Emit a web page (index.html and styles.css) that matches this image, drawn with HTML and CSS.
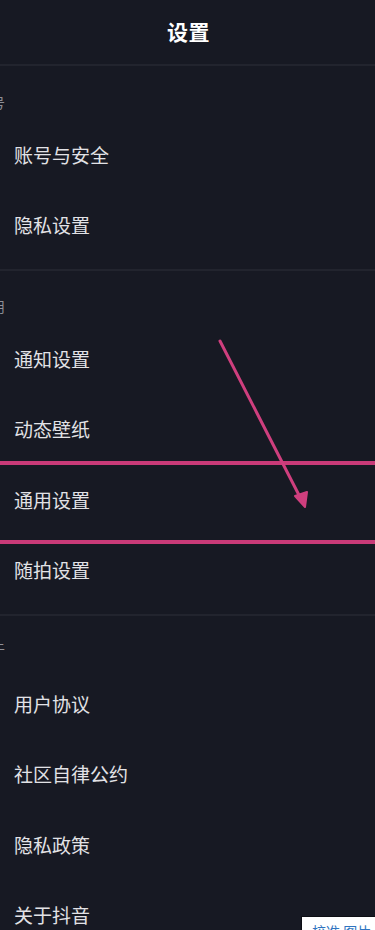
FILE: index.html
```html
<!DOCTYPE html>
<html lang="zh-CN">
<head>
<meta charset="utf-8">
<title>设置</title>
<link rel="stylesheet" href="styles.css">
</head>
<body>
<div class="screen">
  <header class="topbar"><h1 class="title">设置</h1></header>
  <section class="group first">
    <div class="group-head">账号</div>
    <div class="row">账号与安全</div>
    <div class="row">隐私设置</div>
  </section>
  <section class="group">
    <div class="group-head">通用</div>
    <div class="row">通知设置</div>
    <div class="row">动态壁纸</div>
    <div class="row">通用设置</div>
    <div class="row">随拍设置</div>
  </section>
  <section class="group last">
    <div class="group-head">关于</div>
    <div class="row">用户协议</div>
    <div class="row">社区自律公约</div>
    <div class="row">隐私政策</div>
    <div class="row">关于抖音</div>
  </section>

  <svg class="marks" width="375" height="930" viewBox="0 0 375 930">
    <rect x="0" y="461" width="375" height="4" fill="#c93a78"/>
    <rect x="0" y="540" width="375" height="4" fill="#c93a78"/>
    <line x1="220" y1="341" x2="302" y2="501" stroke="#cf3f7e" stroke-width="3" stroke-linecap="round"/>
    <path d="M295 496 L305 507 L307 492 Z" fill="#cf3f7e" stroke="#cf3f7e" stroke-width="2" stroke-linejoin="round"/>
  </svg>
  <div class="stamp"><span>校准 图片</span></div>
</div>
</body>
</html>
```
FILE: styles.css
```css
* { box-sizing: border-box; }
html, body { margin: 0; padding: 0; }
body {
  background: #171923;
  font-family: "Noto Sans CJK SC", "Noto Sans", sans-serif;
}
.screen {
  position: relative;
  width: 375px;
  height: 930px;
  overflow: hidden;
  background: #171923;
}
.topbar {
  height: 66px;
  border-bottom: 2px solid #22242e;
  display: flex;
  align-items: center;
  justify-content: center;
}
.title {
  margin: 0;
  font-size: 21px;
  font-weight: 700;
  color: #ffffff;
  letter-spacing: 0.5px;
  position: relative;
  left: 1px;
  top: -1px;
}
.group {
  border-bottom: 2px solid #22242e;
  padding-bottom: 9px;
}
.group.last { border-bottom: none; }
.group-head {
  height: 52px;
  padding-top: 26px;
  margin-left: -23px;
  font-size: 14px;
  line-height: 18px;
  color: #8e8f97;
}
.group.first .group-head { height: 53px; padding-top: 27px; }
.group.last .group-head { padding-top: 24px; }
.row {
  height: 70.5px;
  display: flex;
  align-items: center;
  padding-left: 14px;
  font-size: 19px;
  color: #e2e2e6;
}
.marks {
  position: absolute;
  left: 0;
  top: 0;
  pointer-events: none;
}
.stamp {
  position: absolute;
  left: 301px;
  top: 916px;
  width: 80px;
  height: 20px;
  background: #ffffff;
  border-top: 1px solid #0d0e14;
  border-left: 1px solid #0d0e14;
  overflow: hidden;
  padding: 6px 0 0 10px;
  font-size: 14px;
  line-height: 16px;
  color: #2f74c0;
  white-space: nowrap;
}
```
